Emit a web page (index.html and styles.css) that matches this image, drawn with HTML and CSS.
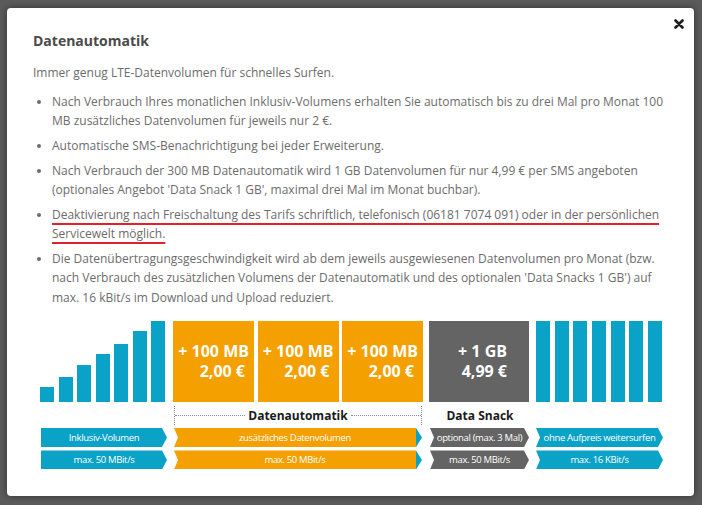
FILE: index.html
```html
<!DOCTYPE html>
<html lang="de">
<head>
<meta charset="utf-8">
<title>Datenautomatik</title>
<link rel="stylesheet" href="styles.css">
</head>
<body>
<div class="modal">
  <button class="close" aria-label="Schließen">
    <svg width="10" height="10" viewBox="0 0 10 10"><path d="M1.5 1.5 L8.5 8.5 M8.5 1.5 L1.5 8.5" stroke="#1e1e1e" stroke-width="2.6" stroke-linecap="round"/></svg>
  </button>
  <h2 class="title">Datenautomatik</h2>
  <p class="lead">Immer genug LTE-Datenvolumen für schnelles Surfen.</p>
  <ul class="facts">
    <li>Nach Verbrauch Ihres monatlichen Inklusiv-Volumens erhalten Sie automatisch bis zu drei Mal pro Monat 100 MB zusätzliches Datenvolumen für jeweils nur 2 €.</li>
    <li>Automatische SMS-Benachrichtigung bei jeder Erweiterung.</li>
    <li>Nach Verbrauch der 300 MB Datenautomatik wird 1 GB Datenvolumen für nur 4,99 € per SMS angeboten (optionales Angebot 'Data Snack 1 GB', maximal drei Mal im Monat buchbar).</li>
    <li><span class="mark">Deaktivierung nach Freischaltung des Tarifs schriftlich, telefonisch (06181 7074 091) oder in der persönlichen Servicewelt möglich.</span></li>
    <li>Die Datenübertragungsgeschwindigkeit wird ab dem jeweils ausgewiesenen Datenvolumen pro Monat (bzw. nach Verbrauch des zusätzlichen Volumens der Datenautomatik und des optionalen 'Data Snacks 1 GB') auf max. 16 kBit/s im Download und Upload reduziert.</li>
  </ul>

  <div class="chart">
    <div class="graphics">
      <div class="bars">
        <span class="bar" style="height:15px"></span>
        <span class="bar" style="height:25px"></span>
        <span class="bar" style="height:37px"></span>
        <span class="bar" style="height:48px"></span>
        <span class="bar" style="height:58px"></span>
        <span class="bar" style="height:71px"></span>
        <span class="bar" style="height:81px"></span>
      </div>
      <div class="boxes">
        <div class="box orange"><span class="l1">+ 100 MB</span><span class="l2">2,00 €</span></div>
        <div class="box orange"><span class="l1">+ 100 MB</span><span class="l2">2,00 €</span></div>
        <div class="box orange"><span class="l1">+ 100 MB</span><span class="l2">2,00 €</span></div>
      </div>
      <div class="box grey"><span class="l1">+ 1 GB</span><span class="l2">4,99 €</span></div>
      <div class="bars full">
        <span class="bar"></span><span class="bar"></span><span class="bar"></span><span class="bar"></span><span class="bar"></span><span class="bar"></span><span class="bar"></span>
      </div>
    </div>

    <div class="labels">
      <div class="lab-spacer"></div>
      <div class="lab-auto"><span>Datenautomatik</span></div>
      <div class="lab-snack">Data Snack</div>
    </div>

    <div class="arrows">
      <div class="seg s1 blue first">Inklusiv-Volumen</div>
      <div class="seg s2 orange-tip">zusätzliches Datenvolumen</div>
      <div class="seg s3 dark">optional (max. 3 Mal)</div>
      <div class="seg s4 blue">ohne Aufpreis weitersurfen</div>
    </div>
    <div class="arrows">
      <div class="seg s1 blue first">max. 50 MBit/s</div>
      <div class="seg s2 orange-tip">max. 50 MBit/s</div>
      <div class="seg s3 dark">max. 50 MBit/s</div>
      <div class="seg s4 blue">max. 16 KBit/s</div>
    </div>
  </div>
</div>
</body>
</html>
```

FILE: styles.css
```css
html, body {
  margin: 0;
  padding: 0;
}
body {
  background: #5a5a5a;
  font-family: "Open Sans", "DejaVu Sans", sans-serif;
  width: 702px;
  height: 505px;
  overflow: hidden;
}
.modal {
  position: relative;
  box-sizing: border-box;
  margin: 8px 0 0 7px;
  width: 687px;
  height: 488px;
  background: #fff;
  border-radius: 4px;
  box-shadow: 0 0 6px rgba(0,0,0,0.45);
  padding: 23px 28px 0 26px;
  color: #6c6c6c;
}
.close {
  position: absolute;
  top: 11px;
  right: 10px;
  width: 10px;
  height: 10px;
  padding: 0;
  border: 0;
  background: none;
  display: flex;
}
.title {
  margin: 0;
  font-size: 14px;
  line-height: 20px;
  font-weight: 700;
  color: #4a4a4a;
}
.lead {
  margin: 12px 0 0;
  font-size: 12px;
  line-height: 19px;
}
.facts {
  list-style: none;
  margin: 10px 0 0;
  padding: 0;
  font-size: 12px;
  line-height: 19.3px;
}
.facts li {
  position: relative;
  padding-left: 19px;
  margin-bottom: 5.5px;
}
.facts li::before {
  content: "";
  position: absolute;
  left: 4px;
  top: 8px;
  width: 4px;
  height: 4px;
  border-radius: 50%;
  background: #6c6c6c;
}
.mark {
  text-decoration: underline;
  text-decoration-color: #e0232b;
  text-decoration-thickness: 2px;
  text-underline-offset: 4px;
}
.chart {
  margin: 14px 0 0 7px;
}
.graphics {
  display: flex;
  align-items: flex-end;
  height: 81px;
}
.bars {
  display: flex;
  align-items: flex-end;
  gap: 4.5px;
  width: 125px;
  height: 81px;
}
.bar {
  display: block;
  width: 14px;
  background: #0aa2c6;
}
.bars.full .bar {
  height: 81px;
  width: 14px;
}
.bars.full {
  gap: 4.67px;
  margin-left: 7px;
  width: 126px;
}
.boxes {
  display: flex;
  gap: 3.5px;
  margin-left: 8px;
}
.box {
  box-sizing: border-box;
  height: 81px;
  display: flex;
  flex-direction: column;
  align-items: flex-end;
  padding-top: 20px;
  color: #fff;
  font-weight: 700;
  font-size: 16px;
  line-height: 20px;
}
.box.orange {
  width: 81px;
  background: #f4a000;
  padding-right: 5px;
}
.box.orange .l2 { padding-right: 4px; }
.box.grey {
  width: 100px;
  margin-left: 6px;
  background: #646464;
  padding-right: 22px;
}
.labels {
  display: flex;
  margin-top: 4px;
  height: 19px;
  align-items: center;
}
.lab-spacer { width: 134px; }
.lab-auto {
  box-sizing: border-box;
  width: 248px;
  height: 19px;
  display: flex;
  align-items: center;
  border-left: 1px dotted #8a8a8a;
  border-right: 1px dotted #8a8a8a;
  font-size: 12px;
  font-weight: 700;
  color: #1a1a1a;
}
.lab-auto::before, .lab-auto::after {
  content: "";
  flex: 1;
  border-top: 1px dotted #8a8a8a;
}
.lab-auto span { padding: 0 3px; }
.lab-snack {
  width: 100px;
  margin-left: 8px;
  text-align: center;
  font-size: 12px;
  font-weight: 700;
  color: #1a1a1a;
}
.arrows {
  display: flex;
  height: 19px;
  margin-top: 3.5px;
}
.labels + .arrows { margin-top: 3px; }
.seg {
  box-sizing: border-box;
  height: 100%;
  display: flex;
  align-items: center;
  justify-content: center;
  color: #fff;
  font-size: 9.5px;
  letter-spacing: -0.35px;
  clip-path: polygon(0 0, calc(100% - 5px) 0, 100% 50%, calc(100% - 5px) 100%, 0 100%, 4px 50%);
  white-space: nowrap;
}
.seg.first {
  clip-path: polygon(0 0, calc(100% - 5px) 0, 100% 50%, calc(100% - 5px) 100%, 0 100%);
}
.blue { background: #0aa2c6; }
.dark { background: #646464; }
.orange-tip {
  background: linear-gradient(to right, #f4a000 0, #f4a000 calc(100% - 6px), #0aa2c6 calc(100% - 6px));
  clip-path: polygon(0 0, calc(100% - 6px) 0, 100% 50%, calc(100% - 6px) 100%, 0 100%, 4px 50%);
  padding-right: 6px;
}
.s1 { width: 126px; margin-left: 1px; }
.s2 { width: 248px; margin-left: 7px; }
.s3 { width: 99px; margin-left: 8px; }
.s4 { width: 127px; margin-left: 7px; }
```
